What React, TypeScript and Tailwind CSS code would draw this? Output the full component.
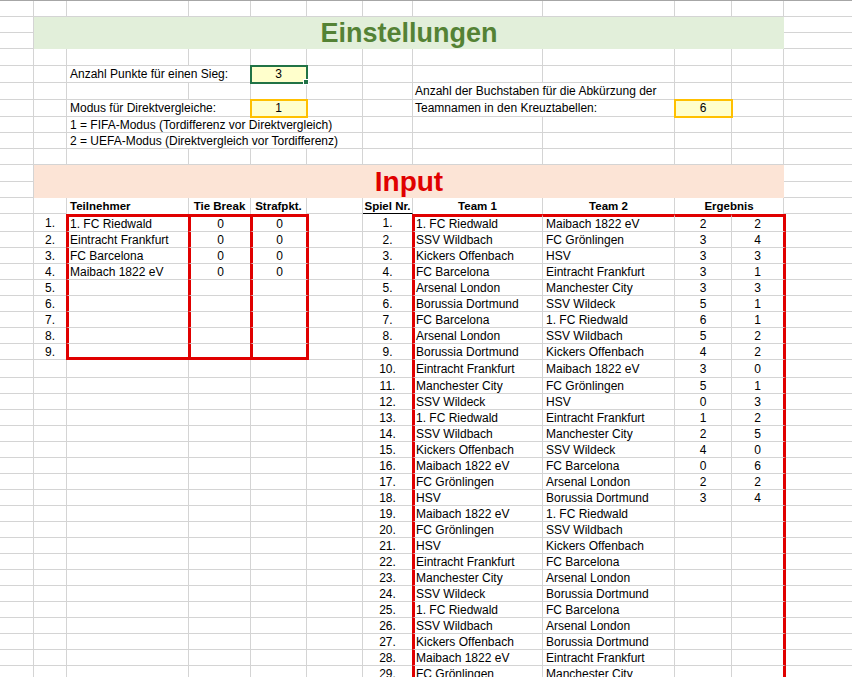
import type { ReactNode } from "react"

// Excel-like sheet: "Einstellungen" + "Input" blocks

const teams = ["1. FC Riedwald", "Eintracht Frankfurt", "FC Barcelona", "Maibach 1822 eV", "", "", "", "", ""]

const matches: [string, string, string, string][] = [
  ["1. FC Riedwald", "Maibach 1822 eV", "2", "2"],
  ["SSV Wildbach", "FC Grönlingen", "3", "4"],
  ["Kickers Offenbach", "HSV", "3", "3"],
  ["FC Barcelona", "Eintracht Frankfurt", "3", "1"],
  ["Arsenal London", "Manchester City", "3", "3"],
  ["Borussia Dortmund", "SSV Wildeck", "5", "1"],
  ["FC Barcelona", "1. FC Riedwald", "6", "1"],
  ["Arsenal London", "SSV Wildbach", "5", "2"],
  ["Borussia Dortmund", "Kickers Offenbach", "4", "2"],
  ["Eintracht Frankfurt", "Maibach 1822 eV", "3", "0"],
  ["Manchester City", "FC Grönlingen", "5", "1"],
  ["SSV Wildeck", "HSV", "0", "3"],
  ["1. FC Riedwald", "Eintracht Frankfurt", "1", "2"],
  ["SSV Wildbach", "Manchester City", "2", "5"],
  ["Kickers Offenbach", "SSV Wildeck", "4", "0"],
  ["Maibach 1822 eV", "FC Barcelona", "0", "6"],
  ["FC Grönlingen", "Arsenal London", "2", "2"],
  ["HSV", "Borussia Dortmund", "3", "4"],
  ["Maibach 1822 eV", "1. FC Riedwald", "", ""],
  ["FC Grönlingen", "SSV Wildbach", "", ""],
  ["HSV", "Kickers Offenbach", "", ""],
  ["Eintracht Frankfurt", "FC Barcelona", "", ""],
  ["Manchester City", "Arsenal London", "", ""],
  ["SSV Wildeck", "Borussia Dortmund", "", ""],
  ["1. FC Riedwald", "FC Barcelona", "", ""],
  ["SSV Wildbach", "Arsenal London", "", ""],
  ["Kickers Offenbach", "Borussia Dortmund", "", ""],
  ["Maibach 1822 eV", "Eintracht Frankfurt", "", ""],
  ["FC Grönlingen", "Manchester City", "", ""],
]

const cols = ["w-[34px]", "w-[33px]", "w-[122px]", "w-[62px]", "w-[56px]", "w-[56px]", "w-[50px]", "w-[130px]", "w-[132px]", "w-[57px]", "w-[52px]"]

const base = "flex shrink-0 items-center overflow-hidden whitespace-nowrap leading-[14px]"
const gl = "border-b border-r border-[#d4d4d4]"

function C({ className = "", children }: { className?: string; children?: ReactNode }) {
  return <div className={`${base} ${className}`}>{children}</div>
}

function Blank({ from = 0, to = 11 }: { from?: number; to?: number }) {
  return (
    <>
      {cols.slice(from, to).map((w, i) => (
        <C key={i} className={`${w} ${gl}`} />
      ))}
    </>
  )
}

function Last() {
  return <C className="flex-1 border-b border-[#d4d4d4]" />
}

function InputBox({ value, selected }: { value: string; selected?: boolean }) {
  return (
    <div
      className={`relative z-10 flex shrink-0 items-center justify-center bg-[#ffffcc] leading-[14px] outline-2 -outline-offset-1 ${gl} ${
        selected ? "outline-[#217346]" : "outline-[#ffc000]"
      } ${value === "6" ? "w-[57px]" : "w-[56px]"}`}
    >
      {value}
      {selected && <span className="absolute -bottom-[3px] -right-[3px] h-[6px] w-[6px] border border-white bg-[#217346]" />}
    </div>
  )
}

function Band({ title, tone }: { title: string; tone: "green" | "red" }) {
  const green = tone === "green"
  return (
    <div className={`flex ${green ? "h-[32px]" : "h-[33px]"}`}>
      <div className="flex w-[34px] shrink-0 flex-col">
        <C className={`${green ? "h-[16px]" : "h-[17px]"} w-[34px] ${gl}`} />
        <C className={`h-[16px] w-[34px] ${gl}`} />
      </div>
      <div
        className={`flex w-[750px] shrink-0 items-center justify-center font-bold leading-none ${
          green ? "bg-[#e2efda] text-[27px] text-[#548235]" : "bg-[#fce4d6] text-[28px] text-[#e00000]"
        }`}
      >
        {title}
      </div>
      <div className="flex flex-1 flex-col">
        <C className={`${green ? "h-[16px]" : "h-[17px]"} border-b border-[#d4d4d4]`} />
        <C className="h-[16px] border-b border-[#d4d4d4]" />
      </div>
    </div>
  )
}

const redT = "border-t-[3px] border-t-[#e00000]"

function DataRow({ i, m }: { i: number; m: [string, string, string, string] }) {
  const first = i === 0
  const last = i === 8
  const h = i === 0 || i === 9 ? "h-[18px]" : "h-[16px]"
  const top = first ? redT : ""
  const bottom = last ? "border-b-[3px] border-b-[#e00000]" : "border-b border-b-[#d4d4d4]"
  const redL = "border-l-[3px] border-l-[#e00000]"
  return (
    <div className={`flex ${h}`}>
      <C className={`w-[34px] ${gl}`} />
      {i < 9 ? (
        <>
          <C className="w-[32px] justify-center border-b border-[#d4d4d4]">{i + 1}.</C>
          <C className={`w-[122px] pl-px ${redL} ${top} ${bottom}`}>{teams[i]}</C>
          <C className={`w-[62px] justify-center ${redL} ${top} ${bottom}`}>{i < 4 ? "0" : ""}</C>
          <C className={`w-[59px] justify-center ${redL} border-r-[3px] border-r-[#e00000] ${top} ${bottom}`}>
            {i < 4 ? "0" : ""}
          </C>
          <C className={`w-[54px] ${gl}`} />
        </>
      ) : (
        <Blank from={1} to={6} />
      )}
      <C className="w-[49px] justify-center border-b border-[#d4d4d4]">{i + 1}.</C>
      <C className={`w-[131px] pl-px ${redL} border-r border-b border-r-[#d4d4d4] border-b-[#d4d4d4] ${top}`}>{m[0]}</C>
      <C className={`w-[132px] pl-[3px] ${gl} ${top}`}>{m[1]}</C>
      <C className={`w-[57px] justify-center ${gl} ${top}`}>{m[2]}</C>
      <C className={`w-[54px] justify-center border-r-[3px] border-r-[#e00000] border-b border-b-[#d4d4d4] ${top}`}>{m[3]}</C>
      <Last />
    </div>
  )
}

export default function App() {
  return (
    <div className="h-screen w-full overflow-hidden border-t border-[#a6a6a6] bg-white font-['Liberation_Sans',Arial,sans-serif] text-[12px] text-black">
      {/* Einstellungen */}
      <div className="flex h-[16px]">
        <Blank />
        <Last />
      </div>
      <Band title="Einstellungen" tone="green" />
      <div className="flex h-[17px]">
        <Blank />
        <Last />
      </div>
      <div className="flex h-[17px]">
        <Blank to={2} />
        <C className={`w-[184px] pl-[3px] ${gl}`}>Anzahl Punkte für einen Sieg:</C>
        <InputBox value="3" selected />
        <Blank from={5} />
        <Last />
      </div>
      <div className="flex h-[17px]">
        <Blank to={7} />
        <C className={`w-[262px] pl-[2px] ${gl}`}>Anzahl der Buchstaben für die Abkürzung der</C>
        <Blank from={9} />
        <Last />
      </div>
      <div className="flex h-[17px]">
        <Blank to={2} />
        <C className={`w-[184px] pl-[3px] ${gl}`}>Modus für Direktvergleiche:</C>
        <InputBox value="1" />
        <Blank from={5} to={7} />
        <C className={`w-[262px] pl-[2px] ${gl}`}>Teamnamen in den Kreuztabellen:</C>
        <InputBox value="6" />
        <Blank from={10} />
        <Last />
      </div>
      <div className="flex h-[16px]">
        <Blank to={2} />
        <C className={`w-[296px] pl-[3px] ${gl}`}>1 = FIFA-Modus (Tordifferenz vor Direktvergleich)</C>
        <Blank from={6} />
        <Last />
      </div>
      <div className="flex h-[16px]">
        <Blank to={2} />
        <C className={`w-[296px] pl-[3px] ${gl}`}>2 = UEFA-Modus (Direktvergleich vor Tordifferenz)</C>
        <Blank from={6} />
        <Last />
      </div>
      <div className="flex h-[16px]">
        <Blank />
        <Last />
      </div>

      {/* Input */}
      <Band title="Input" tone="red" />
      <div className="flex h-[16px] text-[11.5px] font-bold">
        <Blank to={2} />
        <C className="w-[122px] border-r border-[#d4d4d4] pl-[3px]">Teilnehmer</C>
        <C className="w-[62px] justify-center border-r border-[#d4d4d4]">Tie Break</C>
        <C className="w-[56px] justify-center border-r border-[#d4d4d4]">Strafpkt.</C>
        <C className={`w-[56px] ${gl}`} />
        <C className="w-[50px] justify-center border-r border-b border-r-[#d4d4d4] border-b-black">Spiel Nr.</C>
        <C className="w-[130px] justify-center border-r border-[#d4d4d4]">Team 1</C>
        <C className="w-[132px] justify-center border-r border-[#d4d4d4]">Team 2</C>
        <C className="w-[109px] justify-center border-r border-[#d4d4d4]">Ergebnis</C>
        <Last />
      </div>
      {matches.map((m, i) => (
        <DataRow key={i} i={i} m={m} />
      ))}
    </div>
  )
}
